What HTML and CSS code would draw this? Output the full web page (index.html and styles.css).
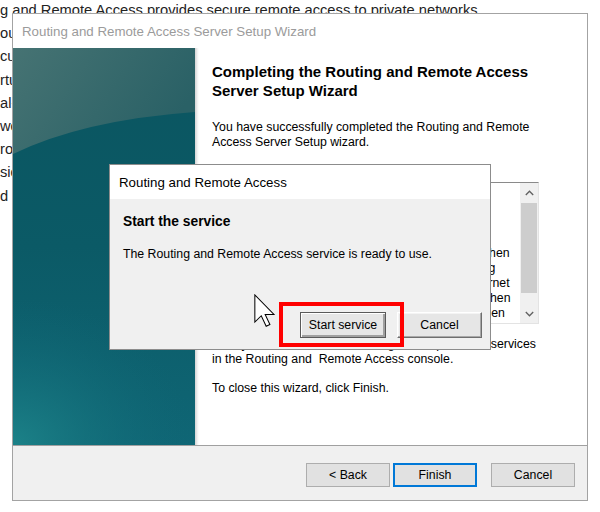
FILE: index.html
```html
<!DOCTYPE html>
<html>
<head>
<meta charset="utf-8">
<title>Routing and Remote Access</title>
<link rel="stylesheet" href="styles.css">
</head>
<body>
<div class="desktop">
  <div class="page-text">
    <div class="line">g and Remote Access provides secure remote access to private networks.</div>
    <div class="line">ou can</div>
    <div class="line">cure</div>
    <div class="line">rtual</div>
    <div class="line">al-up</div>
    <div class="line">work</div>
    <div class="line">rotocol</div>
    <div class="line">sion</div>
    <div class="line">d a</div>
  </div>

  <div class="wizard">
    <div class="wiz-title">Routing and Remote Access Server Setup Wizard</div>
    <div class="wiz-body">
      <div class="wiz-side">
        <svg class="side-art" width="182" height="397" viewBox="0 0 182 397">
          <defs>
            <linearGradient id="base" x1="0" y1="0" x2="0" y2="1">
              <stop offset="0" stop-color="#0b5560"/>
              <stop offset="0.5" stop-color="#0b5a66"/>
              <stop offset="1" stop-color="#0f6675"/>
            </linearGradient>
            <linearGradient id="top" x1="0" y1="0" x2="1" y2="0.4">
              <stop offset="0" stop-color="#467373"/>
              <stop offset="1" stop-color="#2a6166"/>
            </linearGradient>
            <radialGradient id="glow" cx="0" cy="1" r="1">
              <stop offset="0" stop-color="#1c8288"/>
              <stop offset="1" stop-color="#0f6675" stop-opacity="0"/>
            </radialGradient>
          </defs>
          <rect width="182" height="397" fill="url(#base)"/>
          <rect x="0" y="250" width="182" height="147" fill="url(#glow)"/>
          <path d="M0 0 H182 V64 Q70 72 0 106 Z" fill="url(#top)"/>
        </svg>
      </div>
      <div class="wiz-shade"></div>
      <div class="wiz-content">
        <h1 class="wiz-heading">Completing the Routing and Remote Access<br>Server Setup Wizard</h1>
        <p class="wiz-text wiz-intro">You have successfully completed the Routing and Remote<br>Access Server Setup wizard.</p>
        <p class="wiz-text wiz-summary">Summary of selections:</p>
        <div class="summary-box">
          <div class="summary-lines">
            <div>Summary:</div>
            <div>You have configured this server for VPN access.</div>
            <div>&nbsp;</div>
            <div>Notes:</div>
            <div>Clients will be able to connect to this server only when</div>
            <div>the server has a public address, and correct routing</div>
            <div>VPN clients connect to this server through the Internet</div>
            <div>and the NAT interface is set up. Use the console when</div>
            <div>the ports must be changed or the services have been</div>
          </div>
          <div class="scrollbar">
            <div class="sb-btn sb-up">
              <svg width="9" height="6" viewBox="0 0 9 6"><path d="M0.8 5 L4.5 1.2 L8.2 5" fill="none" stroke="#606060" stroke-width="1.3"/></svg>
            </div>
            <div class="sb-track"><div class="sb-thumb"></div></div>
            <div class="sb-btn sb-down">
              <svg width="9" height="6" viewBox="0 0 9 6"><path d="M0.8 1 L4.5 4.8 L8.2 1" fill="none" stroke="#606060" stroke-width="1.3"/></svg>
            </div>
          </div>
        </div>
        <p class="wiz-text wiz-after">After you close this wizard, configure the ports and services<br>in the Routing and&nbsp; Remote Access console.</p>
        <p class="wiz-text wiz-close">To close this wizard, click Finish.</p>
      </div>
    </div>
    <div class="wiz-foot">
      <div class="wbtn">&lt; Back</div>
      <div class="wbtn wbtn-default">Finish</div>
      <div class="wbtn wbtn-cancel">Cancel</div>
    </div>
  </div>

  <div class="dialog">
    <div class="dlg-title">Routing and Remote Access</div>
    <div class="dlg-body">
      <div class="dlg-heading">Start the service</div>
      <div class="dlg-text">The Routing and Remote Access service is ready to use.</div>
      <div class="dlg-buttons">
        <div class="dbtn dbtn-default">Start service</div>
        <div class="dbtn">Cancel</div>
      </div>
    </div>
  </div>

  <div class="highlight"></div>

  <svg class="cursor" width="22" height="34" viewBox="0 0 13 20">
    <path d="M0.5 0.5 L0.5 16.5 L4.3 12.8 L7.2 19 L9.4 18 L6.6 12 L11.8 12 Z" fill="#fff" stroke="#000" stroke-width="0.6" stroke-linejoin="miter"/>
  </svg>
</div>
</body>
</html>
```

FILE: styles.css
```css
html, body {
  margin: 0;
  padding: 0;
}

body {
  background: #ffffff;
  font-family: "Liberation Sans", Arial, sans-serif;
  color: #1e1e1e;
}

.desktop {
  position: relative;
  width: 600px;
  height: 512px;
  overflow: hidden;
  background: #ffffff;
}

/* page text behind the windows */
.page-text {
  margin-top: -1px;
  font-size: 14.7px;
  line-height: 23.2px;
  color: #222;
  white-space: nowrap;
}

/* wizard window */
.wizard {
  position: absolute;
  left: 12px;
  top: 13px;
  width: 576px;
  height: 488px;
  box-sizing: border-box;
  border: 1px solid #a3a3a3;
  background: #f0f0f0;
  display: flex;
  flex-direction: column;
}

.wiz-title {
  height: 34px;
  flex: none;
  background: #ffffff;
  display: flex;
  align-items: center;
  padding-left: 9px;
  font-size: 13.3px;
  color: #9b9b9b;
}

.wiz-body {
  height: 397px;
  flex: none;
  display: flex;
  background: #ffffff;
  border-bottom: 1px solid #a0a0a0;
}

.wiz-side {
  width: 182px;
  flex: none;
  line-height: 0;
}

.side-art {
  display: block;
}

.wiz-shade {
  width: 4px;
  flex: none;
  background: linear-gradient(to right, #d4d4d4, #f6f6f6 70%, #ffffff);
}

.wiz-content {
  flex: 1;
  padding: 14px 0 0 13px;
  font-size: 12.3px;
  color: #000;
}

.wiz-heading {
  margin: 0;
  font-size: 15px;
  line-height: 19px;
  font-weight: bold;
  color: #000;
}

.wiz-text {
  margin: 0;
  line-height: 15px;
  white-space: nowrap;
}

.wiz-intro {
  margin-top: 20px;
}

.wiz-summary {
  margin-top: 12px;
}

.summary-box {
  margin-top: 5px;
  width: 327px;
  height: 142px;
  box-sizing: border-box;
  border: 1px solid #e3e3e3;
  border-top-color: #8a8a8a;
  border-left-color: #8a8a8a;
  background: #ffffff;
  display: flex;
}

.summary-lines {
  flex: 1;
  overflow: hidden;
  padding: 3px 0 0 2px;
  line-height: 15px;
  white-space: nowrap;
}

.scrollbar {
  width: 18px;
  flex: none;
  display: flex;
  flex-direction: column;
  background: #f0f0f0;
}

.sb-btn {
  display: flex;
  align-items: center;
  justify-content: center;
}

.sb-up {
  height: 20px;
}

.sb-down {
  height: 18px;
}

.sb-track {
  flex: 1;
}

.sb-thumb {
  height: 90px;
  margin: 0 1px;
  background: #cdcdcd;
}

.wiz-after {
  margin-top: 13px;
}

.wiz-close {
  margin-top: 14px;
}

.wiz-foot {
  flex: 1;
  display: flex;
  justify-content: flex-end;
  align-items: flex-start;
  padding: 17px 12px 0 0;
  gap: 3px;
}

.wbtn {
  width: 84px;
  height: 24px;
  box-sizing: border-box;
  border: 1px solid #adadad;
  background: #e1e1e1;
  display: flex;
  align-items: center;
  justify-content: center;
  font-size: 12.3px;
  color: #000;
}

.wbtn-default {
  border: 2px solid #0078d7;
}

.wbtn-cancel {
  margin-left: 11px;
}

/* modal dialog */
.dialog {
  position: absolute;
  left: 109px;
  top: 164px;
  width: 382px;
  height: 186px;
  box-sizing: border-box;
  border: 1px solid #8c8c8c;
  background: #f0f0f0;
  display: flex;
  flex-direction: column;
}

.dlg-title {
  height: 34px;
  flex: none;
  background: #ffffff;
  display: flex;
  align-items: center;
  padding-left: 9px;
  font-size: 13.3px;
  color: #000;
}

.dlg-body {
  flex: 1;
  display: flex;
  flex-direction: column;
  padding: 15px 8px 11px 13px;
}

.dlg-heading {
  font-size: 13.8px;
  line-height: 16px;
  font-weight: bold;
  color: #000;
}

.dlg-text {
  margin-top: 17px;
  font-size: 12.3px;
  line-height: 15px;
  color: #000;
}

.dlg-buttons {
  margin-top: auto;
  display: flex;
  justify-content: flex-end;
  gap: 11px;
}

.dbtn {
  width: 85px;
  height: 26px;
  box-sizing: border-box;
  border: 1px solid;
  border-color: #ffffff #6e6e6e #6e6e6e #ffffff;
  box-shadow: inset -1px -1px #a8a8a8, inset 1px 1px #f4f4f4;
  background: #e6e6e6;
  display: flex;
  align-items: center;
  justify-content: center;
  font-size: 12.3px;
  color: #000;
}

.dbtn-default {
  width: 86px;
  border-color: #5a5a5a;
  box-shadow: inset 1px 1px #ffffff, inset -2px -2px #a0a0a0;
}

/* overlays */
.highlight {
  position: absolute;
  left: 279px;
  top: 302px;
  width: 125px;
  height: 45px;
  box-sizing: border-box;
  border: 4px solid #ff0000;
}

.cursor {
  position: absolute;
  left: 254px;
  top: 294px;
}
```
